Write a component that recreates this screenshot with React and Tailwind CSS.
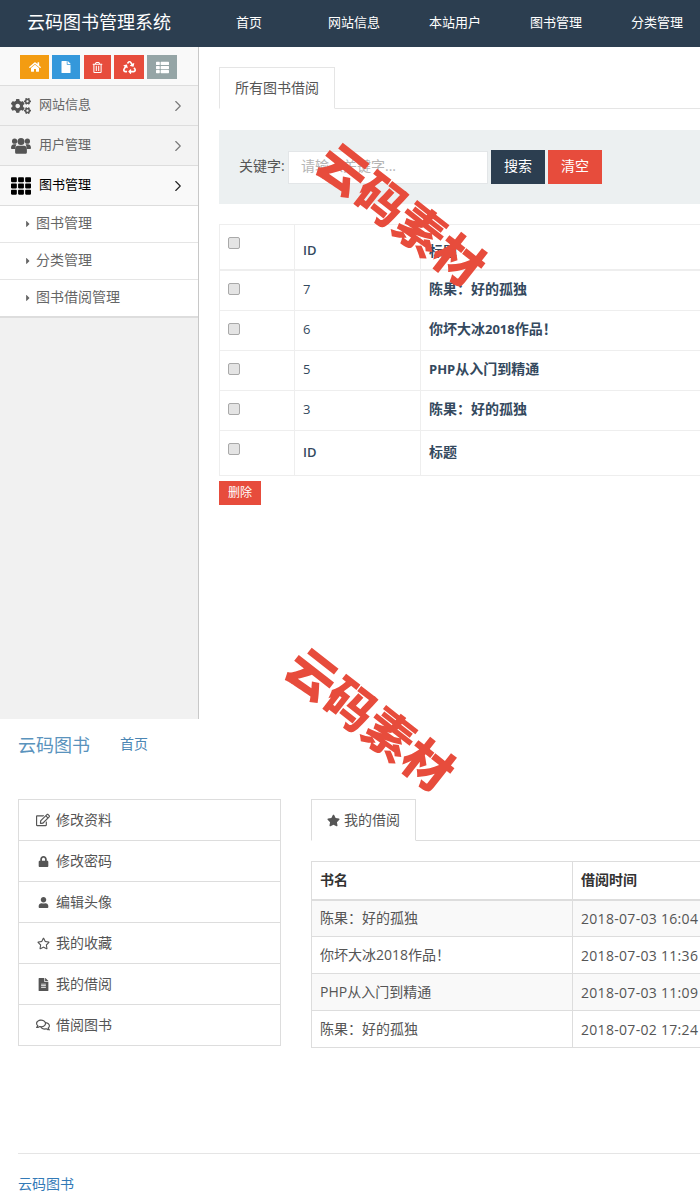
import { FaHome, FaFile, FaRegTrashAlt, FaRecycle, FaThList, FaCogs, FaTh, FaCaretRight, FaRegEdit, FaLock, FaUser, FaRegStar, FaFileAlt, FaRegComments, FaStar } from 'react-icons/fa';
import { ChevronRight } from 'lucide-react';

const navItems = ['首页', '网站信息', '本站用户', '图书管理', '分类管理'];

const toolButtons = [
    { icon: FaHome, className: 'w-[29px] bg-[#f39c12]', size: 12 },
    { icon: FaFile, className: 'w-[28px] bg-[#3498db]', size: 12 },
    { icon: FaRegTrashAlt, className: 'w-[27px] ml-[1px] bg-[#e74c3c]', size: 11 },
    { icon: FaRecycle, className: 'w-[30px] bg-[#e74c3c]', size: 13 },
    { icon: FaThList, className: 'w-[30px] bg-[#95a5a6]', size: 13 },
];

const borrowRows = [
    { id: '7', title: '陈果：好的孤独' },
    { id: '6', title: <>你坏大冰<span className="text-[13px]">2018</span>作品！</> },
    { id: '5', title: <><span className="text-[13px]">PHP</span>从入门到精通</> },
    { id: '3', title: '陈果：好的孤独' },
];

const profileLinks = [
    { label: '修改资料', icon: FaRegEdit, size: 14 },
    { label: '修改密码', icon: FaLock, size: 11 },
    { label: '编辑头像', icon: FaUser, size: 11 },
    { label: '我的收藏', icon: FaRegStar, size: 13 },
    { label: '我的借阅', icon: FaFileAlt, size: 13 },
    { label: '借阅图书', icon: FaRegComments, size: 14 },
];

const history = [
    { title: '陈果：好的孤独', time: '2018-07-03 16:04' },
    { title: '你坏大冰2018作品！', time: '2018-07-03 11:36' },
    { title: 'PHP从入门到精通', time: '2018-07-03 11:09' },
    { title: '陈果：好的孤独', time: '2018-07-02 17:24' },
];

const UsersIcon = ({ size, className }) => (
    <svg width={size} height={size} viewBox="0 0 20 20" fill="currentColor" className={className}>
        <circle cx="3.6" cy="5.2" r="2.6" />
        <circle cx="16.4" cy="5.2" r="2.6" />
        <circle cx="10" cy="5.6" r="3.5" />
        <path d="M0 12c0-2.2 1.2-3.8 3.2-3.8h2.2c-.6 1-.9 2.2-.9 3.6V13H1.2C.5 13 0 12.6 0 12z" />
        <path d="M20 12c0-2.2-1.2-3.8-3.2-3.8h-2.2c.6 1 .9 2.2.9 3.6V13h3.3c.7 0 1.2-.4 1.2-1z" />
        <path d="M6.8 9.8h6.4c1.6 0 2.7 1.6 2.7 4v2.4c0 .9-.7 1.6-1.6 1.6H5.7c-.9 0-1.6-.7-1.6-1.6v-2.4c0-2.4 1.1-4 2.7-4z" />
    </svg>
);

const Check = () => (
    <input type="checkbox" className="block appearance-none w-[12px] h-[12px] bg-[#e4e4e4] border border-[#a9a9a9] rounded-[2px]" />
);

const Watermark = ({ className }) => (
    <div className={`absolute z-10 rotate-[38deg] text-[49px] leading-none font-black text-[#e74c3c] whitespace-nowrap ${className}`}>
        云码素材
    </div>
);

const SideGroup = ({ icon: Icon, label, active }) => (
    <div className={`h-[40px] flex items-center pl-[11px] pr-[11px] border-b border-[#ddd] text-[13px] ${active ? 'bg-[#f9f9f9] text-black' : 'bg-[#f3f3f3] text-[#666]'}`}>
        <Icon size={20} className={active ? 'text-black' : 'text-[#555]'} />
        <span className="ml-[8px] flex-1 pb-[2px]">{label}</span>
        <ChevronRight size={18} strokeWidth={1.5} className={active ? 'text-[#222]' : 'text-[#777]'} />
    </div>
);

const SubItem = ({ label, last }) => (
    <div className={`flex items-center pl-[23px] bg-white text-[14px] text-[#666] ${last ? 'h-[38px] border-b-2 border-[#ddd]' : 'h-[37px] border-b border-[#e5e5e5]'}`}>
        <FaCaretRight size={10} className="text-[#666]" />
        <span className="ml-[3px] pb-[4px]">{label}</span>
    </div>
);

const Sidebar = () => (
    <aside className="w-[199px] shrink-0 bg-[#f1f1f1] border-r border-[#c8c8c8]">
        <div className="h-[39px] bg-[#f9f9f9] border-b border-[#ddd] flex items-start pt-[8px] pl-[20px] gap-[3px]">
            {toolButtons.map(({ icon: Icon, className, size }, i) => (
                <div key={i} className={`h-[24px] flex items-center justify-center text-white ${className}`}>
                    <Icon size={size} />
                </div>
            ))}
        </div>
        <SideGroup icon={FaCogs} label="网站信息" />
        <SideGroup icon={UsersIcon} label="用户管理" />
        <SideGroup icon={FaTh} label="图书管理" active />
        <SubItem label="图书管理" />
        <SubItem label="分类管理" />
        <SubItem label="图书借阅管理" last />
    </aside>
);

const AdminMain = () => (
    <main className="flex-1 min-w-0 overflow-hidden pl-[20px] pt-[20px]">
        <div className="w-[700px]">
            <div className="h-[42px] border-b border-[#e5e5e5] flex">
                <div className="w-[116px] h-[42px] bg-white border border-[#e5e5e5] border-b-white flex items-center justify-center pb-[2px] text-[14px] text-[#555]">
                    所有图书借阅
                </div>
            </div>
            <div className="mt-[21px] h-[74px] bg-[#ecf0f1] flex items-center pl-[20px]">
                <span className="w-[49px] pb-[4px] text-[14px] text-[#555] whitespace-nowrap">关键字:</span>
                <div className="w-[200px] h-[33px] bg-white border border-[#e3e6e8] flex items-center pl-[12px] pb-[4px] text-[14px] text-[#b5b5b5]">
                    请输入关键字...
                </div>
                <button className="ml-[3px] w-[54px] h-[34px] pb-[3px] bg-[#2c3e50] text-white text-[14px]">搜索</button>
                <button className="ml-[3px] w-[54px] h-[34px] pb-[3px] bg-[#e74c3c] text-white text-[14px]">清空</button>
            </div>
            <table className="mt-[20px] w-full table-fixed border-collapse text-[14px] text-[#34495e] font-bold">
                <colgroup>
                    <col className="w-[75px]" />
                    <col className="w-[126px]" />
                    <col />
                </colgroup>
                <thead>
                    <tr className="h-[45px] border-b-2 border-[#eee]">
                        <th className="border border-[#eee] pl-[8px] pt-[12px] align-top"><Check /></th>
                        <th className="border border-[#eee] pl-[8px] pt-[8px] text-left text-[13px] font-semibold">ID</th>
                        <th className="border border-[#eee] pl-[8px] pt-[8px] text-left">标题</th>
                    </tr>
                </thead>
                <tbody>
                    {borrowRows.map((row, i) => (
                        <tr key={row.id} className={i === 0 ? 'h-[41px]' : 'h-[40px]'}>
                            <td className="border border-[#eee] pl-[8px] pt-[12px] align-top"><Check /></td>
                            <td className="border border-[#eee] pl-[8px] pb-[1px] font-normal text-[13px]">{row.id}</td>
                            <td className="border border-[#eee] pl-[8px] pb-[4px]">{row.title}</td>
                        </tr>
                    ))}
                    <tr className="h-[45px]">
                        <td className="border border-[#eee] pl-[8px] pt-[12px] align-top"><Check /></td>
                        <td className="border border-[#eee] pl-[8px] text-[13px] font-semibold">ID</td>
                        <td className="border border-[#eee] pl-[8px] pb-[3px]">标题</td>
                    </tr>
                </tbody>
            </table>
            <button className="block mt-[5px] w-[42px] h-[24px] pb-[1px] bg-[#e74c3c] text-white text-[12px]">删除</button>
        </div>
    </main>
);

const Account = () => (
    <section className="h-[481px] bg-white px-[18px]">
        <div className="h-[80px] flex items-start pt-[14px]">
            <span className="text-[18px] leading-[24px] text-[#5a93bd]">云码图书</span>
            <span className="ml-[30px] pt-[1px] text-[14px] leading-[20px] text-[#4b86b4]">首页</span>
        </div>
        <div className="flex gap-[30px]">
            <ul className="w-[263px] shrink-0 self-start border border-[#ddd] text-[14px] text-[#555]">
                {profileLinks.map(({ label, icon: Icon, size }, i) => (
                    <li key={label} className={`flex items-center pl-[16px] ${i > 0 ? 'h-[41px] border-t border-[#ddd]' : 'h-[40px]'}`}>
                        <span className="w-[16px] flex justify-center text-[#555]"><Icon size={size} /></span>
                        <span className="ml-[5px] pb-[1px]">{label}</span>
                    </li>
                ))}
            </ul>
            <div className="flex-1 min-w-0 overflow-hidden -mr-[18px]">
                <div className="w-[700px]">
                    <div className="h-[42px] border-b border-[#ddd] flex">
                        <div className="w-[105px] h-[42px] bg-white border border-[#ddd] border-b-white flex items-center pl-[15px] gap-[4px] text-[14px] text-[#555]">
                            <FaStar size={13} />
                            <span className="pb-[2px]">我的借阅</span>
                        </div>
                    </div>
                    <table className="mt-[20px] w-full table-fixed border-collapse text-[14px] text-[#555]">
                        <colgroup>
                            <col className="w-[261px]" />
                            <col />
                        </colgroup>
                        <thead>
                            <tr className="h-[38px] border-b-2 border-[#ddd] font-bold text-[#333]">
                                <th className="border border-[#ddd] px-[8px] pb-[2px] text-left">书名</th>
                                <th className="border border-[#ddd] px-[8px] pb-[2px] text-left">借阅时间</th>
                            </tr>
                        </thead>
                        <tbody>
                            {history.map((row, i) => (
                                <tr key={i} className={`h-[37px] ${i % 2 === 0 ? 'bg-[#f9f9f9]' : 'bg-white'}`}>
                                    <td className="border border-[#ddd] px-[8px] pb-[2px]">{row.title}</td>
                                    <td className="border border-[#ddd] px-[8px] tracking-[0.3px] whitespace-nowrap">{row.time}</td>
                                </tr>
                            ))}
                        </tbody>
                    </table>
                </div>
            </div>
        </div>
        <footer className="mt-[105px] -mr-[18px] border-t border-[#e5e5e5] pt-[20px] text-[14px] leading-[20px] text-[#337ab7]">
            云码图书
        </footer>
    </section>
);

const App = () => (
    <div className="relative w-[700px] h-[1200px] overflow-hidden bg-white font-['Open_Sans','Noto_Sans_CJK_SC',sans-serif]">
        <header className="h-[47px] bg-[#2c3e50] flex items-center text-white">
            <div className="w-[236px] shrink-0 pl-[27px] pb-[2px] text-[18px] whitespace-nowrap">云码图书管理系统</div>
            <nav className="flex gap-[49px] pb-[2px] text-[13px] whitespace-nowrap">
                {navItems.map((item, i) => (
                    <span key={item} className={i === 0 ? 'mr-[17px]' : ''}>{item}</span>
                ))}
            </nav>
        </header>
        <div className="h-[672px] flex">
            <Sidebar />
            <AdminMain />
        </div>
        <Account />
        <Watermark className="left-[303px] top-[190px]" />
        <Watermark className="left-[272px] top-[695px]" />
    </div>
);

export default App;
